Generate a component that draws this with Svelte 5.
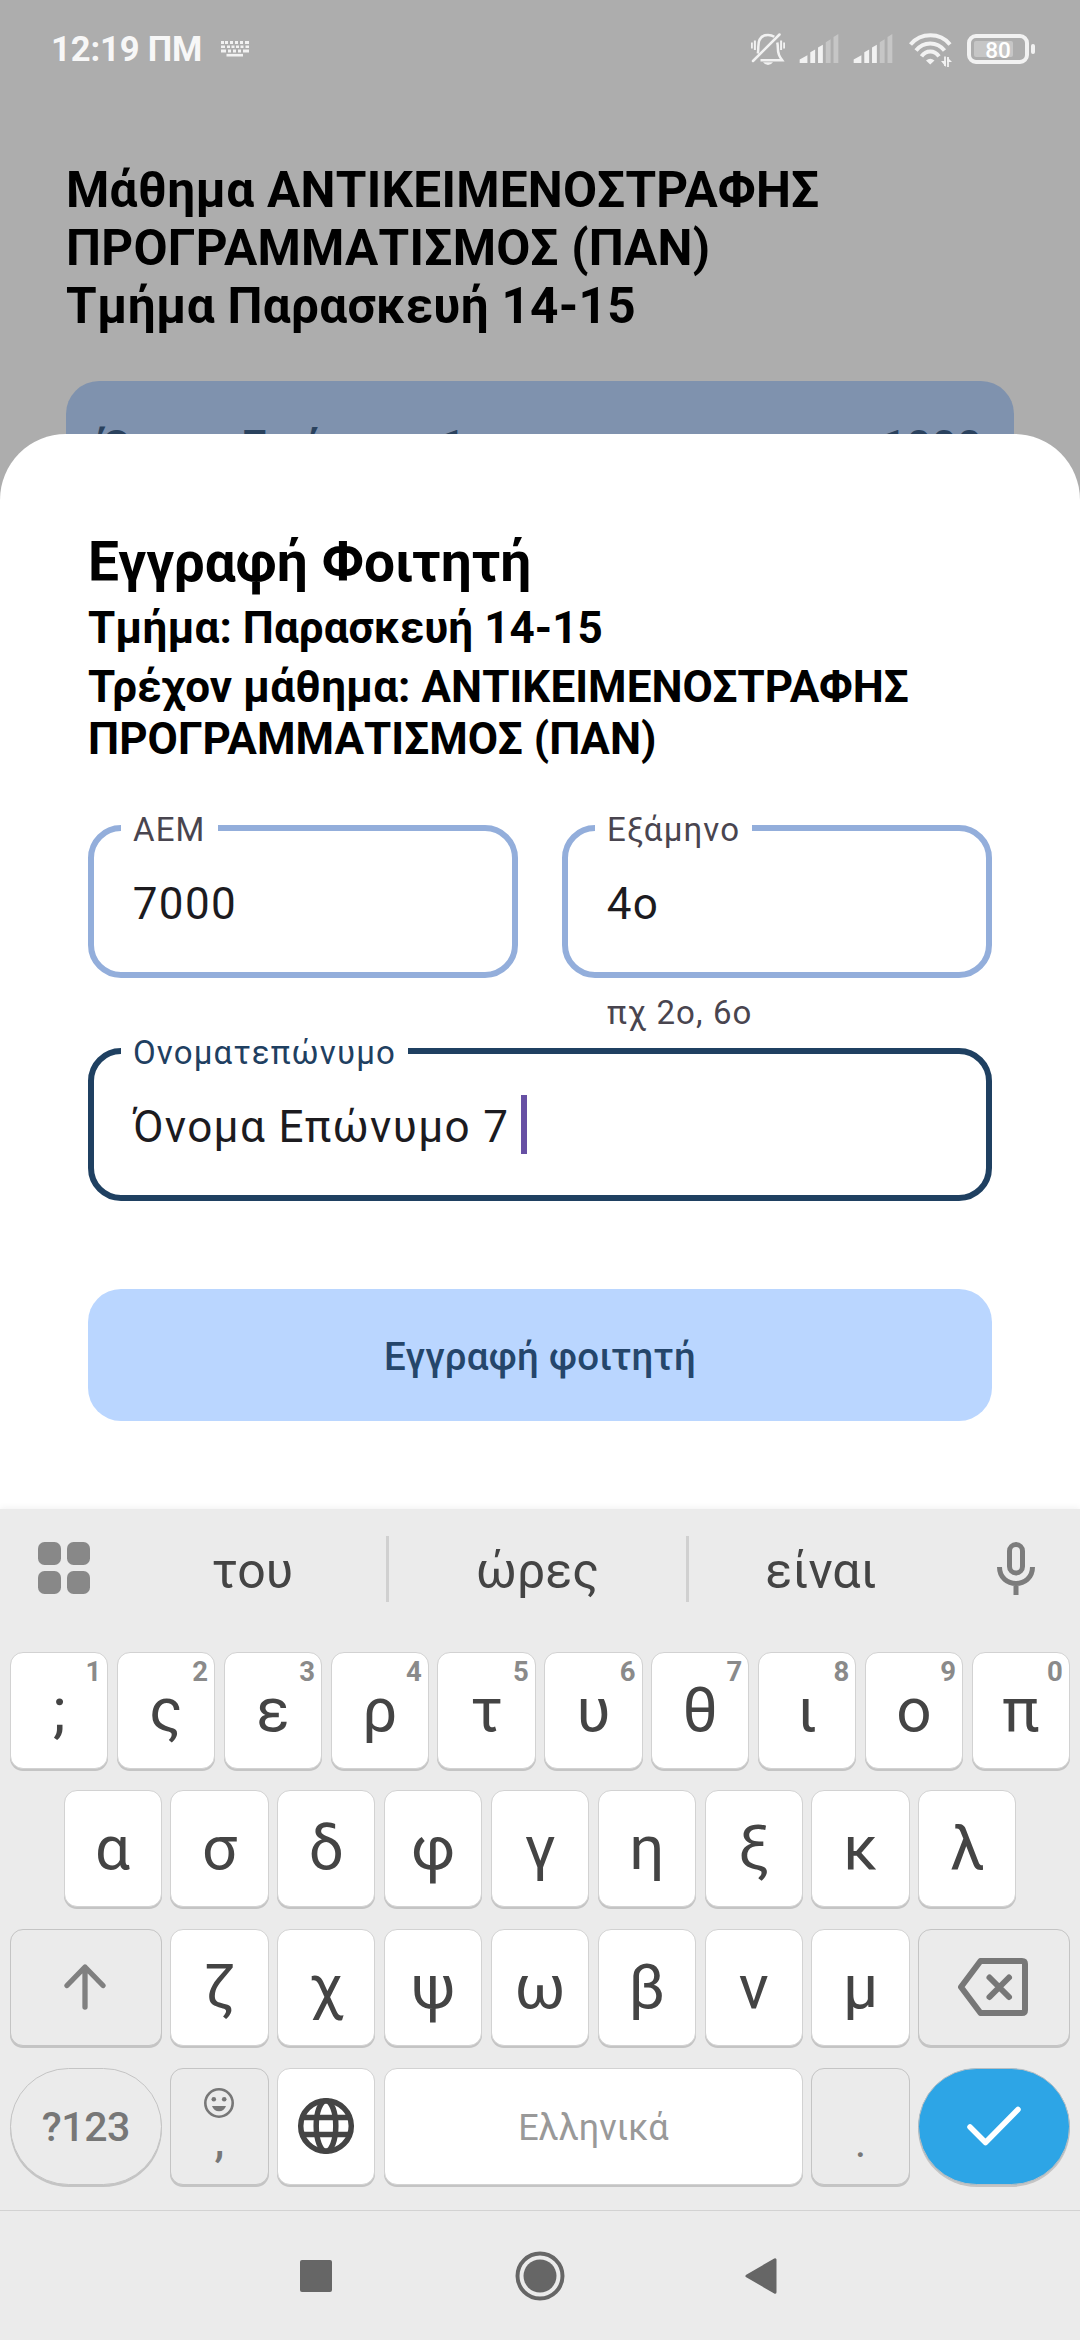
<script>
  const topRow = [
    [';', '1'], ['ς', '2'], ['ε', '3'], ['ρ', '4'], ['τ', '5'],
    ['υ', '6'], ['θ', '7'], ['ι', '8'], ['ο', '9'], ['π', '0'],
  ];
  const homeRow = ['α', 'σ', 'δ', 'φ', 'γ', 'η', 'ξ', 'κ', 'λ'];
  const lowRow = ['ζ', 'χ', 'ψ', 'ω', 'β', 'ν', 'μ'];
</script>

{#snippet signal()}
  <svg class="signal" viewBox="0 0 40 30">
    <path d="M0 26.5 L8 22 V30 H0Z M11 19 L16 16 V30 H11Z M19 14 L24 11 V30 H19Z" fill="#f2f2f2" />
    <path d="M27 8.5 L32 5.5 V30 H27Z M35 3 L40 0 V30 H35Z" fill="#c6c6c6" />
  </svg>
{/snippet}

<div class="screen">
  <section class="backdrop">
    <header class="status">
      <span class="clock">12:19 ΠΜ</span>
      <svg class="ime" viewBox="0 0 28 16" fill="none" stroke="#f2f2f2">
        <path d="M0 1.5H28" stroke-width="3" stroke-dasharray="3 1 3 2 3 2 3 2 3 2 4 0" />
        <path d="M0 5.8H28" stroke-width="2.6" stroke-dasharray="4 2 3 1.5 3 1.5 3 1.5 3 2 4 0" />
        <path d="M0 10H28" stroke-width="2.8" stroke-dasharray="5 2 3 2 3 2 3 2 6 0" />
        <path d="M5.5 14.2H22" stroke-width="2.6" />
      </svg>
      <div class="tray">
        <svg class="bell" viewBox="0 0 34 32" fill="none" stroke="#f2f2f2" stroke-width="2.5">
          <path d="M6.8 20.5 Q7.3 18.5 7.3 14 C7.3 6 10.5 1.9 17 1.9 Q20.5 1.9 23.3 3.8" />
          <path d="M26.3 9.5 Q26.8 12 26.8 14 C26.8 21 28.5 23.5 31.2 27.3 H9.5" />
          <path d="M2 28 L28.5 1.5" stroke-linecap="round" />
          <path d="M.9 9.5V15.5 M33.1 9.5V15.5" stroke-width="1.8" />
          <path d="M3.9 7.5V17 M30.1 7.5V17" stroke-width="2" />
          <path d="M12 29.3 H22 Q20 32 17 32 Q14 32 12 29.3Z" fill="#f2f2f2" stroke="none" />
        </svg>
        {@render signal()}
        {@render signal()}
        <svg class="wifi" viewBox="0 0 43 34" fill="none" stroke="#f2f2f2" stroke-width="4">
          <path d="M1.5 11.5 C12 -.7 31 -.7 41 11.5" />
          <path d="M7 17.5 C14.5 8 28 8 35.5 17.5" />
          <path d="M12.5 23.3 C17 17 25.5 17 30 23.3" />
          <path d="M17 27.5 Q21.2 24 25.5 27.5 L21.2 31.5Z" fill="#f2f2f2" stroke="none" />
          <path d="M36 23.5V33 M39 24V34" stroke-width="1.8" />
          <path d="M32 28 L36.9 34 V28Z M38.1 24 V29 H43Z" fill="#f2f2f2" stroke="none" />
        </svg>
        <div class="battery"><span>80</span></div>
      </div>
    </header>
    <h1>Μάθημα ΑΝΤΙΚΕΙΜΕΝΟΣΤΡΑΦΗΣ ΠΡΟΓΡΑΜΜΑΤΙΣΜΟΣ (ΠΑΝ)<br />Τμήμα Παρασκευή 14-15</h1>
    <div class="student"><span>Όνομα Επώνυμο 1</span><span>1000</span></div>
  </section>

  <section class="sheet">
    <h2>Εγγραφή Φοιτητή</h2>
    <h3>Τμήμα: Παρασκευή 14-15</h3>
    <h3>Τρέχον μάθημα: ΑΝΤΙΚΕΙΜΕΝΟΣΤΡΑΦΗΣ ΠΡΟΓΡΑΜΜΑΤΙΣΜΟΣ (ΠΑΝ)</h3>
    <div class="pair">
      <div class="field"><span class="label">ΑΕΜ</span>7000</div>
      <div>
        <div class="field"><span class="label">Εξάμηνο</span>4ο</div>
        <p class="hint">πχ 2ο, 6ο</p>
      </div>
    </div>
    <div class="field focus"><span class="label">Ονοματεπώνυμο</span>Όνομα Επώνυμο 7<i class="caret"></i></div>
    <button class="submit">Εγγραφή φοιτητή</button>
  </section>

  <section class="keyboard">
    <div class="suggest">
      <svg class="grid" viewBox="0 0 52 52" fill="#888">
        <rect width="23" height="23" rx="6.5" /><rect x="29" width="23" height="23" rx="6.5" />
        <rect y="29" width="23" height="23" rx="6.5" /><rect x="29" y="29" width="23" height="23" rx="6.5" />
      </svg>
      <div class="words"><span>του</span><span>ώρες</span><span>είναι</span></div>
      <svg class="mic" viewBox="0 0 38 53" fill="none" stroke="#7c7c7c" stroke-width="5">
        <rect x="12.5" y="2.5" width="13" height="28.5" rx="6.5" />
        <path d="M2.5 25 C2.5 47 35.5 47 35.5 25 M19 42V53" />
      </svg>
    </div>
    <div class="keys">
      <div class="row">
        {#each topRow as [letter, digit]}
          <div class="key">{letter}<small>{digit}</small></div>
        {/each}
      </div>
      <div class="row">
        {#each homeRow as letter}<div class="key">{letter}</div>{/each}
      </div>
      <div class="row">
        <div class="key wide soft">
          <svg class="shift" viewBox="0 0 42 46" fill="none" stroke="#808080" stroke-width="5.3" stroke-linecap="round" stroke-linejoin="round">
            <path d="M3 21.5 L21 3 L39 21.5 M21 4V43" />
          </svg>
        </div>
        {#each lowRow as letter}<div class="key">{letter}</div>{/each}
        <div class="key wide soft">
          <svg class="erase" viewBox="0 0 70 58" fill="none" stroke="#777" stroke-width="6" stroke-linecap="round" stroke-linejoin="round">
            <path d="M22.5 3 H64 Q67 3 67 6 V52 Q67 55 64 55 H22.5 L3 29Z" />
            <path d="M31.5 19.5 L51 39 M51 19.5 L31.5 39" />
          </svg>
        </div>
      </div>
      <div class="row">
        <div class="key wide soft pill symbols">?123</div>
        <div class="key soft comma">
          <svg class="smile" viewBox="0 0 30 30">
            <circle cx="15" cy="15" r="13.7" fill="none" stroke="#777" stroke-width="2.6" />
            <circle cx="9.8" cy="11.3" r="2.3" fill="#777" /><circle cx="20.2" cy="11.3" r="2.3" fill="#777" />
            <path d="M8 18 H22 Q20 23.3 15 23.3 Q10 23.3 8 18Z" fill="#777" />
          </svg>
          <span>,</span>
        </div>
        <div class="key">
          <svg class="globe" viewBox="0 0 56 56" fill="none" stroke="#444" stroke-width="5.5">
            <circle cx="28" cy="28" r="25.3" />
            <ellipse cx="28" cy="28" rx="9.8" ry="25.3" />
            <path d="M4 19.5H52 M4 36.5H52" />
          </svg>
        </div>
        <div class="key space">Ελληνικά</div>
        <div class="key soft period">.</div>
        <div class="key wide pill enter">
          <svg class="check" viewBox="0 0 54 40" fill="none" stroke="#fff" stroke-width="5.5" stroke-linecap="round" stroke-linejoin="round">
            <path d="M3 21 L18.5 36.5 L51 3.5" />
          </svg>
        </div>
      </div>
    </div>
  </section>

  <nav>
    <svg viewBox="0 0 50 50" fill="#666"><rect x="8" y="9" width="32" height="32" rx="2" /></svg>
    <svg viewBox="0 0 50 50" fill="#666">
      <circle cx="25" cy="25" r="22.5" fill="none" stroke="#666" stroke-width="4" /><circle cx="25" cy="25" r="16.5" />
    </svg>
    <svg viewBox="0 0 50 50" fill="#666" stroke="#666" stroke-width="3" stroke-linejoin="round"><path d="M9 25 L37 8.8 V41.2Z" /></svg>
  </nav>
</div>

<style>
  :global(body) { margin: 0; background: #fff; }
  .screen, .screen * { box-sizing: border-box; }
  .screen {
    width: 1080px; height: 2340px; overflow: hidden;
    display: flex; flex-direction: column;
    font-family: Roboto, sans-serif; color: #000; background: #fff;
  }
  svg { display: block; flex: none; overflow: visible; }
  h1, h2, h3, p { margin: 0; }

  .backdrop { height: 500px; flex: none; background: #adadad; padding: 0 66px; overflow: hidden; }
  .status { height: 97px; margin: 0 -21px 0 -15px; display: flex; align-items: center; }
  .clock { font-size: 34.6px; font-weight: 700; color: #f7f7f7; letter-spacing: -.15px; width: 170px; white-space: nowrap; }
  .ime { width: 28px; height: 16px; }
  .tray { margin-left: auto; display: flex; align-items: center; }
  .bell { width: 34px; height: 32px; margin-right: 14px; }
  .signal { width: 40px; height: 29px; margin-right: 14px; }
  .wifi { width: 43px; height: 34px; margin: 2px 15px 0 2px; }
  .battery {
    position: relative; width: 62px; height: 30px; margin-right: 6px; padding-top: 2px;
    border: 4px solid #f2f2f2; border-radius: 9px;
    display: flex; align-items: center; justify-content: center;
    font-size: 22.5px; font-weight: 500; color: #fff;
  }
  .battery::before { content: ''; position: absolute; left: 3px; top: 3px; width: 39px; height: 16px; background: #c6c6c6; border-radius: 2px; }
  .battery::after { content: ''; position: absolute; left: 60px; top: 6px; width: 4px; height: 10px; background: #f2f2f2; border-radius: 2px; }
  .battery span { position: relative; }
  h1 { margin-top: 64px; font-size: 49.5px; line-height: 58px; font-weight: 700; letter-spacing: .275px; white-space: nowrap; width: 800px; white-space: normal; }
  .student {
    margin-top: 46px; height: 150px; padding: 40px 32px 0 35px; border-radius: 33px;
    background: #7f92ae; color: #2a425e;
    display: flex; justify-content: space-between;
    font-size: 44px; line-height: 52px; font-weight: 700;
  }

  .sheet {
    position: relative; height: 1075px; margin-top: -66px; padding: 96px 88px 0; flex: none;
    background: #fff; border-radius: 66px 66px 0 0;
  }
  h2 { font-size: 55px; line-height: 64px; font-weight: 700; margin-bottom: 8px; }
  h3 { font-size: 44px; line-height: 52px; font-weight: 700; letter-spacing: .04px; }
  h3 + h3 { margin-top: 7px; }
  .pair { display: grid; grid-template-columns: 1fr 1fr; gap: 44px; margin-top: 60px; height: 223px; }
  .field {
    position: relative; height: 153px; padding: 40px 38px 0 38.7px;
    border: 6px solid #93aedb; border-radius: 33px; color: #1c1b1f;
    font-size: 44px; line-height: 66px; letter-spacing: 1.375px; white-space: nowrap;
  }
  .label {
    position: absolute; left: 27px; top: -23px; padding: 0 12px; background: #fff;
    font-size: 33px; line-height: 44px; letter-spacing: 1.15px; color: #49454f;
  }
  .hint { margin: 13px 0 0 45px; font-size: 33px; line-height: 44px; letter-spacing: 1.1px; color: #49454f; }
  .focus { border-color: #1f4061; }
  .focus .label { color: #1f4061; }
  .caret { display: inline-block; width: 6px; height: 59px; margin-left: 11.5px; background: #6750a4; vertical-align: -12px; }
  .submit {
    display: block; width: 904px; height: 132px; margin-top: 88px; padding: 3px 0 0; border: 0; border-radius: 33px;
    background: #bad6ff; color: #25466b; font: 500 38.5px/55px Roboto, sans-serif; letter-spacing: .275px;
  }

  .keyboard { position: relative; height: 701px; flex: none; background: #ebebeb; box-shadow: 0 -1px 7px rgba(0, 0, 0, .06); }
  .suggest { height: 143px; padding: 27px 45px 0 38px; display: flex; align-items: flex-start; }
  .grid { width: 52px; height: 52px; margin-top: 6px; }
  .words { display: flex; width: 864px; margin-left: 11px; margin-right: auto; }
  .words span { flex: none; width: 300px; height: 66px; line-height: 71px; text-align: center; font-size: 50px; color: #444; }
  .words span:first-child { width: 285px; padding-left: 18px; }
  .words span:nth-child(2) { border: solid #d0d0d0; border-width: 0 3px; width: 303px; }
  .words span:last-child { width: 264px; }
  .mic { width: 38px; height: 53px; margin-top: 6px; }
  .keys { display: grid; grid-template-rows: 138px 139px 139px 119px; padding: 0 10px; }
  .row { display: flex; justify-content: center; gap: 8.67px; }
  .key {
    position: relative; flex: none; width: 98.2px; height: 117px; padding-bottom: 2px; border: 1px solid #d2d2d2; border-radius: 13px;
    background: #fff; box-shadow: 0 2px 0 #c4c4c4; color: #444;
    display: flex; align-items: center; justify-content: center;
    font-size: 62px; line-height: 113px;
  }
  .key small { position: absolute; right: 6px; top: 2px; font-size: 27.5px; line-height: 34px; font-weight: 700; color: #8a8a8a; }
  .wide { width: 151.6px; }
  .soft { background: #ebebeb; border-color: #c4c4c4; color: #777; }
  .pill { border-radius: 59px; }
  .symbols { font-size: 41px; font-weight: 500; letter-spacing: -.4px; padding: 2px 0 0; }
  .comma { flex-direction: column; justify-content: flex-start; padding-top: 19px; }
  .comma span { font-size: 44px; line-height: 52px; font-weight: 500; margin-top: -3px; }
  .space { width: 418.8px; padding: 4px 0 0; font-size: 36px; color: #999; }
  .period { font-size: 44px; line-height: 80px; padding: 31px 0 0; }
  .enter { background: #2da5e6; border-color: #b8bec2; }
  .shift { width: 42px; height: 46px; margin-right: 2px; }
  .erase { width: 70px; height: 58px; margin-right: 3px; }
  .smile { width: 30px; height: 30px; }
  .globe { width: 56px; height: 56px; }
  .check { width: 54px; height: 40px; }

  nav {
    position: relative; height: 130px; flex: none; background: #ebebeb; border-top: 1px solid #d2d2d2;
    display: flex; justify-content: space-between; padding: 40px 292px 0;
  }
  nav svg { width: 50px; height: 50px; }
</style>
